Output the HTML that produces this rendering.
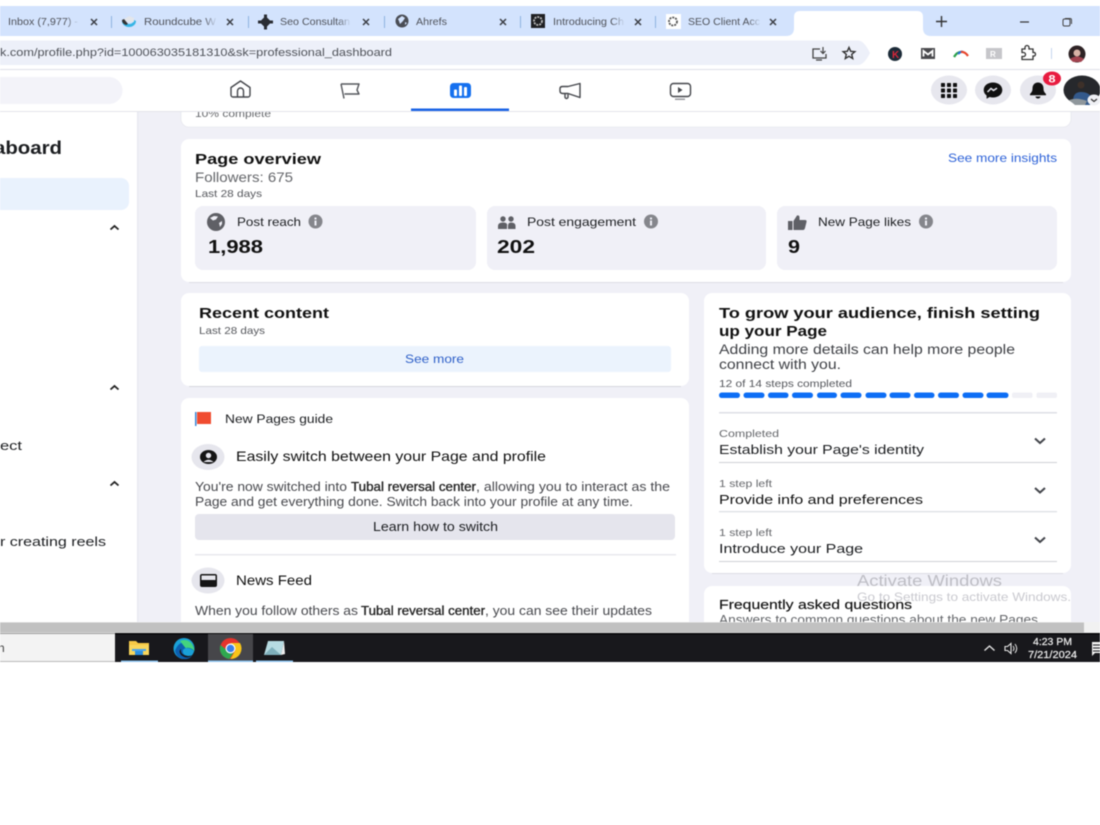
<!DOCTYPE html>
<html><head><meta charset="utf-8"><title>Dashboard</title>
<style>
html,body{margin:0;padding:0;background:#fff;width:1100px;height:825px;overflow:hidden}
svg{display:block;filter:blur(.4px)}
text{font-family:"Liberation Sans",sans-serif;white-space:pre}
.b{font-weight:bold}
.d{fill:#1c1e21}
.g{fill:#65676b}
.t{fill:#4f525a;font-size:10.5px}
.m{stroke:#222;stroke-width:.3px;fill:#222}
</style></head><body>
<svg width="1100" height="825" viewBox="0 0 1100 825" xmlns="http://www.w3.org/2000/svg" lengthAdjust="spacingAndGlyphs">
<defs>
<clipPath id="pg"><rect x="0" y="112" width="1100" height="510"/></clipPath>
<linearGradient id="fade"><stop offset="0" stop-color="#d3e3fd" stop-opacity="0"/><stop offset="1" stop-color="#d3e3fd"/></linearGradient>
<g id="x"><path d="M-3-3L3 3M3-3L-3 3" stroke="#3c3f46" stroke-width="1.500" fill="none"/></g>
<g id="info"><circle r="7" fill="#85868c"/><rect x="-1" y="-1" width="2" height="5" fill="#f0f0f7"/><rect x="-1" y="-4" width="2" height="2" fill="#f0f0f7"/></g>
<g id="chev"><path d="M-5-2.500L0 2L5-2.500" stroke="#44464c" stroke-width="2" fill="none"/></g>
<g id="up"><path d="M-4 1.500L0-2L4 1.500" stroke="#222" stroke-width="1.800" fill="none"/></g>
</defs>

<!-- tab strip -->
<rect x="0" y="6" width="1100" height="30" fill="#d3e3fd"/>
<path d="M786 36Q794 36 794 28V17Q794 11 800 11H917Q923 11 923 17V28Q923 36 931 36Z" fill="#fff"/>
<g fill="#8fb3e0"><rect x="111" y="16" width="1" height="12"/><rect x="248" y="16" width="1" height="12"/><rect x="384" y="16" width="1" height="12"/><rect x="520" y="16" width="1" height="12"/><rect x="655" y="16" width="1" height="12"/></g>
<text class="t" x="8" y="25" textLength="70" lengthAdjust="spacingAndGlyphs">Inbox (7,977) -</text>
<text class="t" x="144" y="25" textLength="72" lengthAdjust="spacingAndGlyphs">Roundcube W</text>
<text class="t" x="280" y="25" textLength="70" lengthAdjust="spacingAndGlyphs">Seo Consultan</text>
<text class="t" x="416" y="25" textLength="31" lengthAdjust="spacingAndGlyphs">Ahrefs</text>
<text class="t" x="553" y="25" textLength="71" lengthAdjust="spacingAndGlyphs">Introducing Ch</text>
<text class="t" x="688" y="25" textLength="72" lengthAdjust="spacingAndGlyphs">SEO Client Acc</text>
<g fill="url(#fade)"><rect x="66" y="14" width="13" height="14"/><rect x="204" y="14" width="13" height="14"/><rect x="338" y="14" width="13" height="14"/><rect x="612" y="14" width="13" height="14"/><rect x="748" y="14" width="13" height="14"/></g>
<use href="#x" x="94" y="22"/><use href="#x" x="230" y="22"/><use href="#x" x="366" y="22"/><use href="#x" x="503" y="22"/><use href="#x" x="638" y="22"/><use href="#x" x="773" y="22"/>
<!-- favicons -->
<path d="M122 21a7 6 0 0 0 14 0l-2-1a5 4 0 0 1-10 0z" fill="#37b5e5"/><path d="M123 20l6-4 5 2v4h-7z" fill="#e4e6ea"/><path d="M122 20a7 5 0 0 0 4 5l2-1-4-5z" fill="#333"/>
<path d="M258 22h15M265.500 14.500v15" stroke="#2a2d34" stroke-width="3"/><path d="M265.500 16l6 6-6 6-6-6z" fill="#2a2d34"/>
<circle cx="402" cy="21" r="6.500" fill="#4a4d55"/><path d="M398 19l4-3 3 2-2 3-3 3-1-3zM405 22l2 1-2 2z" fill="#d3e3fd"/>
<rect x="531" y="14" width="14" height="14" fill="#1f2023"/><circle cx="538" cy="21" r="4" fill="none" stroke="#bbb" stroke-width="1.800" stroke-dasharray="2 1"/>
<rect x="666" y="14" width="15" height="15" fill="#fff"/><circle cx="673" cy="21.500" r="4" fill="none" stroke="#555" stroke-width="1.800" stroke-dasharray="2 1"/>
<path d="M936 21.500h11M941.500 16v11" stroke="#333" stroke-width="1.400"/>
<path d="M1020 22h9" stroke="#333" stroke-width="1.200"/>
<rect x="1063" y="19" width="7" height="7" rx="1.500" fill="none" stroke="#444" stroke-width="1"/><path d="M1065 18.500h5a1.500 1.500 0 0 1 1.500 1.500v4" fill="none" stroke="#444"/>

<!-- toolbar -->
<rect x="0" y="36" width="1100" height="33" fill="#fff"/>
<path d="M0 40.500H858Q864 40.500 870 53Q864 65 858 65H0Z" fill="#edf0f9"/>
<text x="0" y="56" font-size="11" fill="#50535a" textLength="392" lengthAdjust="spacingAndGlyphs">k.com/profile.php?id=100063035181310&amp;sk=professional_dashboard</text>
<path d="M820 49h-7v9h13v-4M816 60h6" fill="none" stroke="#444" stroke-width="1.300"/><path d="M823 47v6M820.500 51l2.500 2.500 2.500-2.500" fill="none" stroke="#444" stroke-width="1.200"/>
<path d="M849 47.500l1.700 3.800 4.200.4-3.200 2.700 1 4.100-3.700-2.200-3.700 2.200 1-4.100-3.200-2.700 4.200-.4z" fill="none" stroke="#333" stroke-width="1.400"/>
<circle cx="895" cy="54" r="7" fill="#1c2b38"/><text x="892" y="58" font-size="10" class="b" fill="#d9263a">K</text>
<rect x="921" y="48" width="14" height="11" fill="#4a4a4e"/><path d="M923.500 56.500v-5.500l4.500 3.500 4.500-3.500v5.500" stroke="#fff" stroke-width="1.800" fill="none"/>
<path d="M954 57q3-5 7-5" stroke="#2ca24c" stroke-width="2.200" fill="none"/><path d="M958 54q3-3 5-2" stroke="#2b6fd6" stroke-width="2.200" fill="none"/><path d="M961 52q4-.5 7 4" stroke="#e8452c" stroke-width="2.200" fill="none"/>
<rect x="986" y="48" width="16" height="11" fill="#c6c6ca"/><text x="990" y="57" font-size="8" fill="#fff" class="b">R</text>
<path d="M1022 49h3v-1.500a2 2 0 0 1 4 0V49h4v3.500h1.500a2 2 0 0 1 0 3.500H1033v3.500h-11v-3h1.500a1.800 1.800 0 0 0 0-4H1022z" fill="none" stroke="#333" stroke-width="1.300"/>
<rect x="1051" y="48" width="1" height="11" fill="#c5d6ee"/>
<circle cx="1077" cy="54" r="8.500" fill="#2e2325"/><circle cx="1077" cy="53" r="3.500" fill="#d8b3a6"/><path d="M1070 59q7-5 14 0l-3 3h-8z" fill="#a2434f"/>
<rect x="0" y="69" width="1100" height="1" fill="#dfe1e8"/>

<!-- page bg -->
<rect x="0" y="70" width="1100" height="552" fill="#f0f0f7"/>
<!-- sidebar -->
<rect x="0" y="111" width="137" height="511" fill="#fff"/>
<rect x="137" y="111" width="1.500" height="511" fill="#e9eaf1"/>
<text class="b d" x="-6" y="154" font-size="18" textLength="68" lengthAdjust="spacingAndGlyphs">aboard</text>
<path d="M0 178H121a8 8 0 0 1 8 8V202a8 8 0 0 1-8 8H0Z" fill="#e9f2fd"/>
<use href="#up" x="114.500" y="228"/><use href="#up" x="114.500" y="388"/><use href="#up" x="114.500" y="484"/>
<text x="0" y="450" font-size="13" class="d" textLength="22" lengthAdjust="spacingAndGlyphs">ect</text>
<text x="0" y="546" font-size="13" class="d" textLength="106" lengthAdjust="spacingAndGlyphs">r creating reels</text>

<g clip-path="url(#pg)">
<!-- top card -->
<path d="M181 100H1071V119a8 8 0 0 1-8 8H189a8 8 0 0 1-8-8Z" fill="#fff" stroke="#e2e3ea" stroke-width=".6"/>
<text x="195" y="117" font-size="10.500" class="g" textLength="76" lengthAdjust="spacingAndGlyphs">10% complete</text>

<!-- page overview -->
<rect x="181" y="139" width="890" height="143" rx="8" fill="#fff"/>
<path d="M189 282.500H1063" stroke="#dcdde4"/>
<text class="b" fill="#111" x="195" y="164" font-size="15" textLength="126" lengthAdjust="spacingAndGlyphs">Page overview</text>
<text class="g" x="195" y="182" font-size="13.500" textLength="98" lengthAdjust="spacingAndGlyphs">Followers: 675</text>
<text fill="#55575c" x="195" y="197" font-size="10.500" textLength="67" lengthAdjust="spacingAndGlyphs">Last 28 days</text>
<text fill="#2d62d8" x="948" y="162" font-size="12" textLength="109" lengthAdjust="spacingAndGlyphs">See more insights</text>
<rect x="195" y="206" width="281" height="64" rx="8" fill="#f0f0f7"/>
<rect x="487" y="206" width="279" height="64" rx="8" fill="#f0f0f7"/>
<rect x="777" y="206" width="280" height="64" rx="8" fill="#f0f0f7"/>
<circle cx="216" cy="222" r="9" fill="#5f6066"/><path d="M210 218l4-2 4 .5-2 3-3 1zM219 223l3-2 0 3-2 3z" fill="#f0f0f7"/>
<text class="d" x="237" y="226" font-size="12" textLength="64" lengthAdjust="spacingAndGlyphs">Post reach</text>
<use href="#info" x="315.500" y="221.500"/>
<text class="b" fill="#111" x="208" y="253" font-size="18.500" textLength="55" lengthAdjust="spacingAndGlyphs">1,988</text>
<g fill="#5f6066"><circle cx="503" cy="219" r="2.700"/><circle cx="511" cy="219" r="2.700"/><path d="M498 229v-3q0-3.500 5-3.500t4 3.500v3zM508 229v-3q0-3.500 3-3.500 4.500 0 4.500 3.500v3z"/></g>
<text class="d" x="527" y="226" font-size="12" textLength="109" lengthAdjust="spacingAndGlyphs">Post engagement</text>
<use href="#info" x="651" y="221.500"/>
<text class="b" fill="#111" x="497" y="253" font-size="18.500" textLength="38" lengthAdjust="spacingAndGlyphs">202</text>
<path d="M788 221h4.500v9H788zM793.500 221l3.500-5.500q2.500-.5 2.500 2v2.500h5.500q2 0 1.500 2l-1.500 6q-.5 2-2 2h-9.500z" fill="#5f6066"/>
<text class="d" x="818" y="226" font-size="12" textLength="93" lengthAdjust="spacingAndGlyphs">New Page likes</text>
<use href="#info" x="926" y="221.500"/>
<text class="b" fill="#111" x="788" y="253" font-size="18.500" textLength="12" lengthAdjust="spacingAndGlyphs">9</text>

<!-- recent content -->
<rect x="181" y="293" width="508" height="93" rx="8" fill="#fff"/>
<path d="M189 386.500H681" stroke="#d6d7de"/>
<text class="b" fill="#111" x="199" y="318" font-size="14.500" textLength="130" lengthAdjust="spacingAndGlyphs">Recent content</text>
<text fill="#55575c" x="199" y="334" font-size="10.500" textLength="66" lengthAdjust="spacingAndGlyphs">Last 28 days</text>
<rect x="199" y="346" width="472" height="26" rx="3" fill="#ebf3fd"/>
<text fill="#2d5fc8" x="405" y="363" font-size="12" textLength="59" lengthAdjust="spacingAndGlyphs">See more</text>

<!-- guide -->
<rect x="181" y="398" width="508" height="260" rx="8" fill="#fff"/>
<rect x="195" y="412" width="1.500" height="14" fill="#3b88d8"/><path d="M197 412h14v12h-14z" fill="#f04c30"/>
<text class="d" x="225" y="423" font-size="11.500" textLength="108" lengthAdjust="spacingAndGlyphs">New Pages guide</text>
<ellipse cx="208" cy="457" rx="16.500" ry="13" fill="#e6e6ed"/>
<ellipse cx="208.500" cy="457" rx="8.500" ry="7" fill="#151515"/><circle cx="208.500" cy="455.500" r="2.700" fill="#e6e6ed"/><path d="M203.500 462q5-4.500 10 0z" fill="#e6e6ed"/>
<text fill="#111" x="236" y="461" font-size="14" textLength="310" lengthAdjust="spacingAndGlyphs">Easily switch between your Page and profile</text>
<text fill="#48494e" x="195" y="491" font-size="12.500" textLength="152" lengthAdjust="spacingAndGlyphs">You're now switched into</text>
<text class="m" x="351" y="491" font-size="12.500" textLength="125" lengthAdjust="spacingAndGlyphs">Tubal reversal center</text>
<text fill="#48494e" x="476" y="491" font-size="12.500" textLength="194" lengthAdjust="spacingAndGlyphs">, allowing you to interact as the</text>
<text fill="#48494e" x="195" y="506" font-size="12.500" textLength="438" lengthAdjust="spacingAndGlyphs">Page and get everything done. Switch back into your profile at any time.</text>
<rect x="195" y="514" width="480" height="26" rx="4" fill="#e5e5ed"/>
<text class="d" x="373" y="531" font-size="12.500" textLength="125" lengthAdjust="spacingAndGlyphs">Learn how to switch</text>
<rect x="195" y="554" width="481" height="1.500" fill="#e8e8ee"/>
<ellipse cx="208" cy="580.500" rx="16.500" ry="13" fill="#e6e6ed"/>
<rect x="200" y="574" width="17" height="13" rx="2" fill="#151515"/><rect x="201.500" y="575.500" width="14" height="4.500" fill="#e6e6ed"/>
<text fill="#111" x="236" y="585" font-size="14" textLength="76" lengthAdjust="spacingAndGlyphs">News Feed</text>
<text fill="#48494e" x="195" y="615" font-size="12.500" textLength="163" lengthAdjust="spacingAndGlyphs">When you follow others as</text>
<text class="m" x="361" y="615" font-size="12.500" textLength="124" lengthAdjust="spacingAndGlyphs">Tubal reversal center</text>
<text fill="#48494e" x="485" y="615" font-size="12.500" textLength="167" lengthAdjust="spacingAndGlyphs">, you can see their updates</text>

<!-- grow card -->
<rect x="704" y="293" width="367" height="280" rx="8" fill="#fff"/>
<path d="M712 573.500H1063" stroke="#dcdde4"/>
<text class="b" fill="#111" x="719" y="318" font-size="14.500" textLength="321" lengthAdjust="spacingAndGlyphs">To grow your audience, finish setting</text>
<text class="b" fill="#111" x="719" y="336" font-size="14.500" textLength="108" lengthAdjust="spacingAndGlyphs">up your Page</text>
<text fill="#3f4146" x="719" y="354" font-size="13.500" textLength="296" lengthAdjust="spacingAndGlyphs">Adding more details can help more people</text>
<text fill="#3f4146" x="719" y="369" font-size="13.500" textLength="122" lengthAdjust="spacingAndGlyphs">connect with you.</text>
<text fill="#55575c" x="719" y="387" font-size="10.500" textLength="133" lengthAdjust="spacingAndGlyphs">12 of 14 steps completed</text>
<g fill="#0d6ef5">
<rect x="719" y="392.500" width="21" height="5.500" rx="2.700"/><rect x="743.500" y="392.500" width="21" height="5.500" rx="2.700"/><rect x="768" y="392.500" width="20.500" height="5.500" rx="2.700"/><rect x="792" y="392.500" width="21" height="5.500" rx="2.700"/><rect x="817" y="392.500" width="20" height="5.500" rx="2.700"/><rect x="840.500" y="392.500" width="21" height="5.500" rx="2.700"/><rect x="865.500" y="392.500" width="21" height="5.500" rx="2.700"/><rect x="889.500" y="392.500" width="21" height="5.500" rx="2.700"/><rect x="914" y="392.500" width="20.500" height="5.500" rx="2.700"/><rect x="938" y="392.500" width="21" height="5.500" rx="2.700"/><rect x="962.500" y="392.500" width="21" height="5.500" rx="2.700"/><rect x="986.500" y="392.500" width="22" height="5.500" rx="2.700"/>
</g>
<rect x="1012" y="392.500" width="20.500" height="5.500" rx="2" fill="#f0f0f5"/><rect x="1036.500" y="392.500" width="20.500" height="5.500" rx="2" fill="#f0f0f5"/>
<rect x="719" y="412" width="338" height="1.500" fill="#dedfe5"/>
<text fill="#65676b" x="719" y="437" font-size="10.500" textLength="60" lengthAdjust="spacingAndGlyphs">Completed</text>
<text class="d" x="719" y="454" font-size="13" textLength="205" lengthAdjust="spacingAndGlyphs">Establish your Page's identity</text>
<rect x="719" y="462" width="338" height="1" fill="#cfd0d6"/>
<text fill="#65676b" x="719" y="487" font-size="10.500" textLength="53" lengthAdjust="spacingAndGlyphs">1 step left</text>
<text fill="#111" x="719" y="504" font-size="13" textLength="204" lengthAdjust="spacingAndGlyphs">Provide info and preferences</text>
<rect x="719" y="511" width="338" height="1.300" fill="#dedfe5"/>
<text fill="#65676b" x="719" y="536" font-size="10.500" textLength="53" lengthAdjust="spacingAndGlyphs">1 step left</text>
<text class="d" x="719" y="553" font-size="13" textLength="144" lengthAdjust="spacingAndGlyphs">Introduce your Page</text>
<rect x="719" y="561" width="338" height="1" fill="#cfd0d6"/>
<use href="#chev" x="1040" y="441"/><use href="#chev" x="1040" y="490.500"/><use href="#chev" x="1040" y="540"/>

<!-- faq -->
<rect x="704" y="586" width="367" height="80" rx="8" fill="#fff"/>
<text fill="#111" x="719" y="609" font-size="13" textLength="193" lengthAdjust="spacingAndGlyphs" stroke="#111" stroke-width=".15">Frequently asked questions</text>
<text fill="#65676b" x="719" y="624" font-size="12.500" textLength="319" lengthAdjust="spacingAndGlyphs">Answers to common questions about the new Pages</text>
<text fill="#bdbdc4" x="857" y="586" font-size="15.500" textLength="145" lengthAdjust="spacingAndGlyphs">Activate Windows</text>
<text fill="#c9c9cf" x="857" y="601" font-size="12" textLength="214" lengthAdjust="spacingAndGlyphs">Go to Settings to activate Windows.</text>
</g>

<!-- FB header -->
<rect x="0" y="70" width="1100" height="41" fill="#fff"/>
<rect x="0" y="111" width="1100" height="1" fill="#e3e4ea"/>
<path d="M0 77H109a13.500 13.500 0 0 1 0 27H0Z" fill="#f3f3f9"/>
<path d="M231 87.500L240.500 81L250 87.500V95a2 2 0 0 1-2 2H233a2 2 0 0 1-2-2Z" fill="none" stroke="#44464b" stroke-width="1.400" stroke-linejoin="round"/><path d="M237.500 97v-6a3 3 0 0 1 6 0v6" fill="none" stroke="#44464b" stroke-width="1.400"/>
<path d="M341 84H359L357 90L359 94H344.500M341 84L344 98.500" fill="none" stroke="#55575c" stroke-width="1.400" stroke-linejoin="round"/>
<rect x="450" y="83" width="21" height="15" rx="3.500" fill="#1570ef"/><g fill="#fff"><rect x="454" y="89.500" width="3" height="6.500" rx="1"/><rect x="459" y="85.500" width="3" height="10.500" rx="1"/><rect x="464" y="87" width="3" height="9" rx="1"/></g>
<rect x="411" y="108.500" width="98" height="2.500" fill="#1a63e6"/>
<path d="M580 83.500V97.500L568 93.500H563Q560 93.500 560 91V88.500Q560 86.500 563 86.500H568Z" fill="none" stroke="#44464b" stroke-width="1.400" stroke-linejoin="round"/><path d="M565 93.500V97a1.500 1.500 0 0 0 3 0v-2.800" fill="none" stroke="#44464b" stroke-width="1.400"/>
<rect x="670.500" y="83.500" width="20" height="13" rx="3" fill="none" stroke="#44464b" stroke-width="1.400"/><path d="M678 87l4.500 3-4.500 3z" fill="#44464b"/><rect x="675" y="98.500" width="10" height="1.500" fill="#9a9ba0"/>

<ellipse cx="949" cy="90" rx="18" ry="14.500" fill="#e7e7ee"/>
<g fill="#111"><rect x="941" y="83" width="4" height="4" rx=".6"/><rect x="947" y="83" width="4" height="4" rx=".6"/><rect x="953" y="83" width="4" height="4" rx=".6"/><rect x="941" y="88.500" width="4" height="4" rx=".6"/><rect x="947" y="88.500" width="4" height="4" rx=".6"/><rect x="953" y="88.500" width="4" height="4" rx=".6"/><rect x="941" y="94" width="4" height="4" rx=".6"/><rect x="947" y="94" width="4" height="4" rx=".6"/><rect x="953" y="94" width="4" height="4" rx=".6"/></g>
<ellipse cx="993" cy="90" rx="18" ry="14.500" fill="#e7e7ee"/>
<path d="M993 82.500c-5.400 0-9.300 3.300-9.300 7.500 0 2.300 1.100 4.200 2.900 5.500v3.200l3-1.700c1.100.3 2.200.5 3.400.5 5.400 0 9.300-3.300 9.300-7.500s-3.900-7.500-9.300-7.500z" fill="#111"/><path d="M987.500 92l3.500-3.500 2.500 1.900 3.500-2.300" fill="none" stroke="#e7e7ee" stroke-width="1.500"/>
<ellipse cx="1038" cy="90" rx="18" ry="14.500" fill="#e7e7ee"/>
<path d="M1038 82.500c-3.500 0-5.500 2.700-5.500 6 0 3-1.300 4.300-2.500 5.500v1.300h16V94c-1.200-1.200-2.500-2.500-2.500-5.500 0-3.300-2-6-5.500-6zM1035.500 96.500a2.500 2 0 0 0 5 0z" fill="#111"/>
<ellipse cx="1052" cy="78.500" rx="9" ry="7" fill="#e81c40"/><text class="b" fill="#fff" x="1048.500" y="82.500" font-size="11" textLength="7" lengthAdjust="spacingAndGlyphs">8</text>
<ellipse cx="1082" cy="90" rx="18.500" ry="14.500" fill="#26282c"/><path d="M1073 101q0-9 8-9 8 0 11 6l-2 7h-14z" fill="#33598b"/><circle cx="1081" cy="85" r="3.500" fill="#3d3029"/><path d="M1069 100q8-3 18 1l-2 4h-10z" fill="#8f979c"/>
<ellipse cx="1094" cy="100" rx="6.500" ry="5.500" fill="#eff0f4"/><path d="M1091 99l3 2.500 3-2.500" fill="none" stroke="#333" stroke-width="1.200"/>

<!-- scrollbar -->
<rect x="0" y="622" width="1100" height="11.500" fill="#f1f1f1"/>
<rect x="0" y="622.500" width="1084" height="10" fill="#c1c1c1"/>

<!-- taskbar -->
<rect x="0" y="633" width="115" height="29" fill="#f3f3f3"/><rect x="0" y="661" width="115" height="1" fill="#bbb"/><rect x="0" y="633" width="115" height="1" fill="#999"/>
<text x="-2" y="652" font-size="12" fill="#444">h</text>
<rect x="115" y="633.500" width="985" height="28.500" fill="#18181c"/>
<rect x="115" y="633" width="985" height="1.500" fill="#060608"/>
<rect x="208" y="634" width="45" height="28" fill="#46464a"/>
<path d="M129 641h7l2 2h11v12h-20z" fill="#f6c946"/><rect x="129" y="645" width="20" height="10" fill="#f9d65c"/><path d="M135 655v-5h8v5z" fill="#2c8fe0"/><rect x="132" y="649" width="14" height="2" fill="#4aa4ec"/>
<circle cx="184" cy="648.500" r="10.500" fill="#1aa1d8"/><path d="M175 651a10 10 0 0 0 17 5q-7 1-9-3-1-4 3-5 5 0 8 3 .5-8-7-9-9-.5-12 9z" fill="#0c5fb0"/><path d="M180 641q7-3 12 3 2 3 2.500 7-4-4-9-3z" fill="#44d37e"/><path d="M181 649q-1 6 7 7 3 0 5-1-6 5-12 0-3-4 0-6z" fill="#18181c"/>
<circle cx="230.500" cy="648.500" r="10.500" fill="#e5342c"/><path d="M220.500 645a10.500 10.500 0 0 0 9 14l5-8-8-1z" fill="#2fa84f"/><path d="M230.500 643h9.500a10.500 10.500 0 0 1-9.500 16l5-9z" fill="#f8c518"/><circle cx="230.500" cy="648.500" r="5" fill="#fff"/><circle cx="230.500" cy="648.500" r="3.800" fill="#3a7fe8"/>
<path d="M268 641h16l-3 14h-17z" fill="#b6dbe2"/><path d="M264 655l8-8 9 8z" fill="#7fb0bc"/><path d="M281 655l3-14 1 13z" fill="#eee"/>
<rect x="121" y="660.500" width="37" height="1.500" fill="#8ec3ee"/><rect x="208" y="660.500" width="45" height="1.500" fill="#8ec3ee"/><rect x="256" y="660.500" width="37" height="1.500" fill="#8ec3ee"/>
<path d="M984.500 650.500L989.500 646L994.500 650.500" fill="none" stroke="#e8e8e8" stroke-width="1.300"/>
<path d="M1005 646.500h2.500l3.500-3v10l-3.500-3H1005z" fill="none" stroke="#e8e8e8" stroke-width="1.100"/><path d="M1013 646q2 2.500 0 5M1015 644q3.500 4.500 0 9" fill="none" stroke="#e8e8e8" stroke-width="1"/>
<text fill="#f1f1f1" stroke="#f1f1f1" stroke-width=".2" x="1033" y="645" font-size="10.500" textLength="39" lengthAdjust="spacingAndGlyphs">4:23 PM</text>
<text fill="#f1f1f1" stroke="#f1f1f1" stroke-width=".2" x="1028" y="658" font-size="10.500" textLength="49" lengthAdjust="spacingAndGlyphs">7/21/2024</text>
<path d="M1092 642h8v11h-5l-3 3z" fill="#f1f1f1"/><path d="M1093 645h7M1093 648h7M1093 651h7" stroke="#18181c"/>
</svg>
</body></html>
